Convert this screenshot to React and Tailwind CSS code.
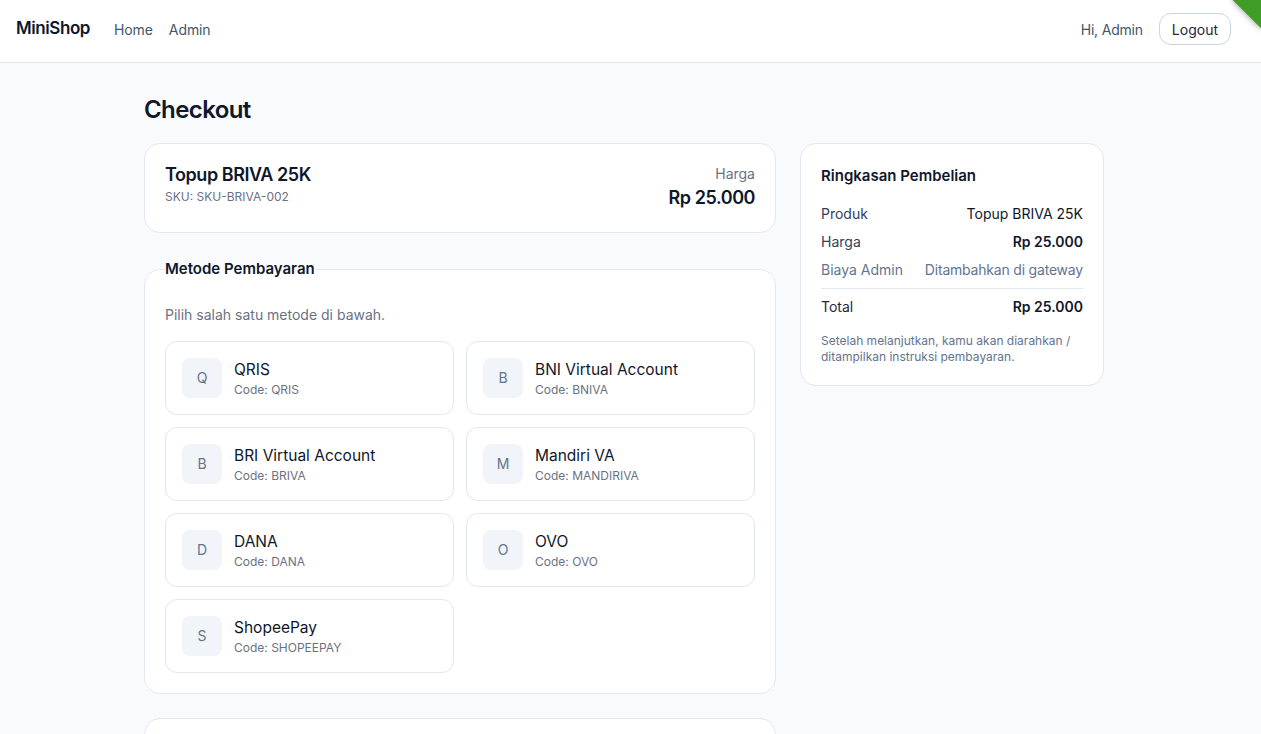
import React from 'react';

const methods = [
  { letter: 'Q', name: 'QRIS', code: 'QRIS' },
  { letter: 'B', name: 'BNI Virtual Account', code: 'BNIVA' },
  { letter: 'B', name: 'BRI Virtual Account', code: 'BRIVA' },
  { letter: 'M', name: 'Mandiri VA', code: 'MANDIRIVA' },
  { letter: 'D', name: 'DANA', code: 'DANA' },
  { letter: 'O', name: 'OVO', code: 'OVO' },
  { letter: 'S', name: 'ShopeePay', code: 'SHOPEEPAY' },
];

function MethodCard({ m }) {
  return (
    <div className="flex items-center gap-3 rounded-xl border border-slate-200 bg-white p-4">
      <div className="flex h-10 w-10 items-center justify-center rounded-lg bg-slate-100 text-sm text-slate-500">
        {m.letter}
      </div>
      <div>
        <div className="text-[15.5px] leading-6 text-slate-900">{m.name}</div>
        <div className="text-xs leading-4 text-gray-500">Code: {m.code}</div>
      </div>
    </div>
  );
}

export default function App() {
  return (
    <div className="relative h-[734px] overflow-hidden bg-slate-50 font-['Inter',sans-serif] text-slate-900">
      {/* Navbar */}
      <header className="flex h-[63px] items-center justify-between border-b border-slate-200 bg-white pb-1 pl-4 pr-[30px]">
        <div className="flex items-center gap-6">
          <span className="text-[17px] font-semibold tracking-tight text-slate-900">MiniShop</span>
          <nav className="flex items-center gap-4 text-[14px] tracking-[-0.1px] text-slate-600">
            <a>Home</a>
            <a>Admin</a>
          </nav>
        </div>
        <div className="flex items-center gap-4">
          <span className="text-[14px] tracking-[-0.2px] text-slate-600">Hi, Admin</span>
          <button className="h-8 rounded-xl border border-slate-300 bg-white px-3 text-[14px] text-slate-800">
            Logout
          </button>
        </div>
      </header>

      <div className="absolute -right-5 -top-5 h-10 w-10 rotate-45 bg-[#3f9c27] shadow-[0_0_6px_rgba(0,0,0,0.45)]" />

      <main className="ml-[144px] w-[960px] pt-[31px]">
        <h1 className="mb-[17px] text-2xl font-semibold tracking-tight text-slate-900">Checkout</h1>

        <div className="grid grid-cols-3 gap-6">
          <div className="col-span-2 space-y-6">
            {/* Produk */}
            <div className="flex items-start justify-between rounded-2xl border border-slate-200 bg-white p-5">
              <div>
                <div className="text-lg font-semibold leading-[22px] tracking-tight">Topup BRIVA 25K</div>
                <div className="mt-[3px] text-xs leading-4 text-gray-500">SKU: SKU-BRIVA-002</div>
              </div>
              <div className="text-right">
                <div className="text-sm leading-5 text-gray-500">Harga</div>
                <div className="text-lg font-semibold leading-7 tracking-tight">Rp 25.000</div>
              </div>
            </div>

            {/* Metode */}
            <fieldset className="rounded-2xl border border-slate-200 bg-white px-5 pb-5 pt-6">
              <legend className="text-[15px] font-semibold leading-6 text-slate-900">Metode Pembayaran</legend>
              <p className="mb-4 text-sm leading-5 text-gray-500">Pilih salah satu metode di bawah.</p>
              <div className="grid grid-cols-2 gap-3">
                {methods.map((m) => (
                  <MethodCard key={m.code} m={m} />
                ))}
              </div>
            </fieldset>

            <div className="h-[80px] rounded-2xl border border-slate-200 bg-white" />
          </div>

          {/* Ringkasan */}
          <aside className="self-start rounded-2xl border border-slate-200 bg-white p-5">
            <div className="mb-4 text-[15px] font-semibold leading-6">Ringkasan Pembelian</div>
            <div className="space-y-2 text-sm leading-5">
              <div className="flex justify-between">
                <span className="text-slate-700">Produk</span>
                <span className="text-slate-900">Topup BRIVA 25K</span>
              </div>
              <div className="flex justify-between">
                <span className="text-slate-700">Harga</span>
                <span className="font-semibold text-slate-900">Rp 25.000</span>
              </div>
              <div className="flex justify-between">
                <span className="text-slate-500">Biaya Admin</span>
                <span className="tracking-[-0.2px] text-slate-500">Ditambahkan di gateway</span>
              </div>
              <div className="flex justify-between border-t border-slate-200 pt-2">
                <span className="text-slate-800">Total</span>
                <span className="font-semibold text-slate-900">Rp 25.000</span>
              </div>
            </div>
            <p className="mt-4 text-xs leading-4 text-slate-500">
              Setelah melanjutkan, kamu akan diarahkan / ditampilkan instruksi pembayaran.
            </p>
          </aside>
        </div>
      </main>
    </div>
  );
}
